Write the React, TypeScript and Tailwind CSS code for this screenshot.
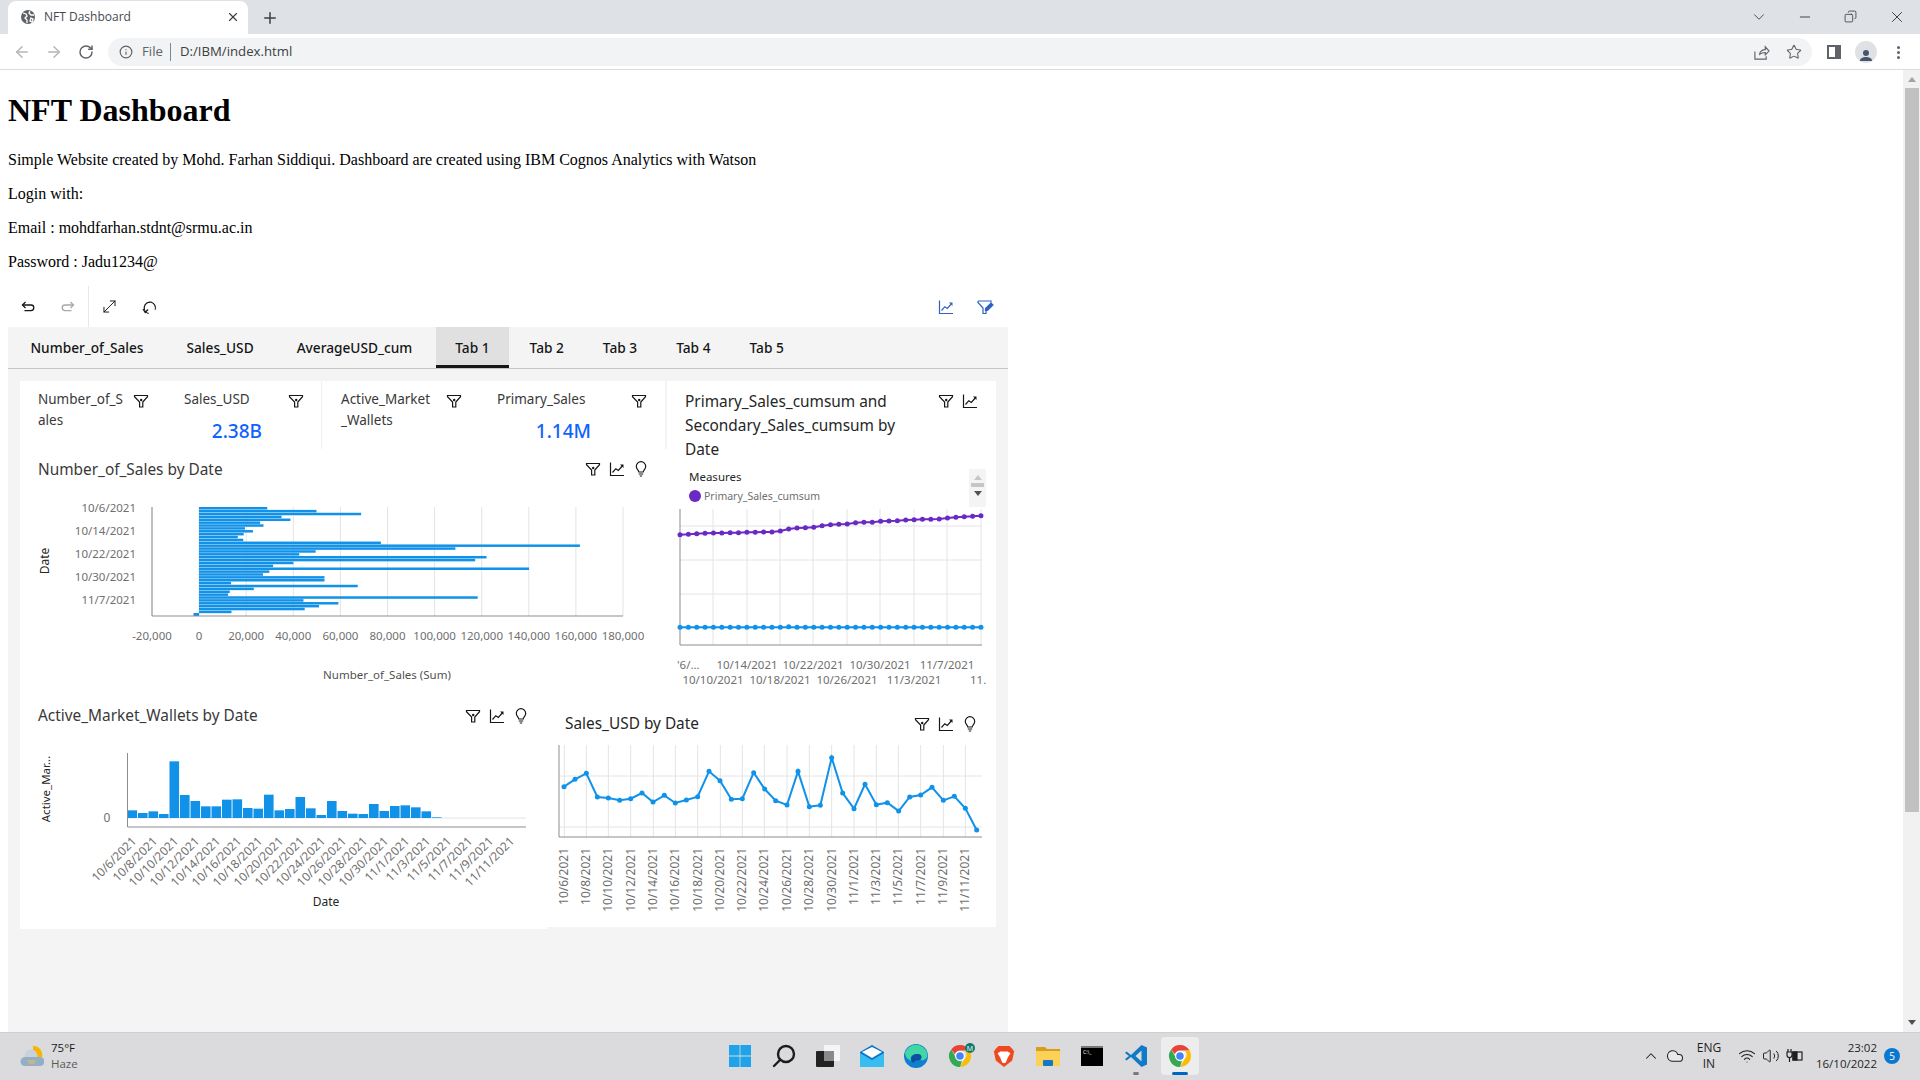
import { ArrowLeft, ArrowRight, ChevronDown, ChevronUp, Cloud, Copy, Info, Minus, MoveDiagonal, Plus, RotateCw, Star, Volume2, Wifi, X } from "lucide-react";

const dashFont = "font-['Noto_Sans',sans-serif]";
const sysFont = "font-['Open_Sans',sans-serif]";

const Funnel = ({ className = "" }: { className?: string }) => (
  <svg viewBox="0 0 16 16" className={`h-4 w-4 shrink-0 ${className}`} fill="none" stroke="#161616" strokeWidth="1.2">
    <path d="M1.500 2.500h13v1.200L9.800 9v5H6.600V9L1.500 3.700z" />
    <circle cx="8.200" cy="7" r="1.200" fill="#161616" stroke="none" />
  </svg>
);

const FunnelEdit = () => (
  <svg viewBox="0 0 18 16" className="h-4 w-[18px] shrink-0" fill="none" stroke="#2f62c0" strokeWidth="1.200">
    <path d="M1 2h13v1.500M1 2v1.500L6 9v5.500h3V12" />
    <path d="M8.500 11.500v-2L14 4l2 2-5.500 5.500z" fill="#2f62c0" />
  </svg>
);

const Trend = ({ color = "#161616", className = "" }: { color?: string; className?: string }) => (
  <svg viewBox="0 0 16 16" className={`h-4 w-4 shrink-0 ${className}`} fill="none" stroke={color} strokeWidth="1.200">
    <path d="M1.500 1.500v13h13.500" />
    <path d="M3.500 11.500l3.300-3.800 2.500 1.800 4-4.500" />
    <path d="M11 3.500h3.500V7z" fill={color} stroke="none" />
  </svg>
);

const Bulb = ({ className = "" }: { className?: string }) => (
  <svg viewBox="0 0 16 16" className={`h-4 w-4 shrink-0 ${className}`} fill="none" stroke="#161616" strokeWidth="1.200">
    <path d="M5.800 11c0-1.800-2.500-2.800-2.500-5.600a4.700 4.700 0 0 1 9.400 0c0 2.800-2.500 3.800-2.500 5.600z" />
    <path d="M5.800 13h4.400M6.800 15h2.400" />
  </svg>
);

const ChartIcons = ({ bulb = true, className = "" }: { bulb?: boolean; className?: string }) => (
  <div className={`flex items-center gap-2 ${className}`}>
    <Funnel />
    <Trend />
    {bulb && <Bulb />}
  </div>
);

const UndoIcon = ({ color }: { color: string }) => (
  <svg viewBox="0 0 16 16" className="h-4 w-4" fill="none" stroke={color} strokeWidth="1.300">
    <path d="M2.500 6H11a2.800 2.800 0 0 1 0 5.600H4.500" />
    <path d="M5.500 3L2.500 6l3 3" />
  </svg>
);

const ResetIcon = () => (
  <svg viewBox="0 0 16 16" className="h-4 w-4" fill="none" stroke="#161616" strokeWidth="1.200">
    <path d="M4.500 13.500A6 6 0 0 1 4 5.500a6 6 0 0 1 8.400-.5 6 6 0 0 1-.5 8.500" transform="rotate(-30 8 8)" />
    <path d="M2 10l2.200 3.500L7 10.500" />
  </svg>
);

const salesEnds = [635, 752, 858, 669, 690, 618, 626, 582, 601, 579, 565, 578, 905, 1378, 1082, 750, 711, 1156, 1129, 697, 649, 1257, 640, 625, 771, 771, 549, 850, 603, 546, 542, 1135, 721, 804, 758, 724, 550];

const BarChart = () => (
  <svg viewBox="20 490 645 210" width="645" height="210" className="block">
    {[0, 1, 2, 3, 4, 5, 6, 7, 8, 9, 10].map((i) => (
      <line key={i} x1={152 + 47.1 * i} x2={152 + 47.1 * i} y1="507" y2="616" stroke="#e4e4e4" />
    ))}
    {salesEnds.map((v, i) => (
      <rect key={i} x="199" y={507 + i * 2.88} width={v / 2.376 - 199} height="2.500" fill="#1192e8" />
    ))}
    <rect x="193.500" y="613" width="5.500" height="3" fill="#1192e8" />
    <path d="M152 507V616H623" fill="none" stroke="#8d8d8d" />
    {["10/6/2021", "10/14/2021", "10/22/2021", "10/30/2021", "11/7/2021"].map((t, i) => (
      <text key={t} x="136" y={512 + i * 23} textAnchor="end" fontSize="11.500" fill="#6f6f6f">{t}</text>
    ))}
    {["-20,000", "0", "20,000", "40,000", "60,000", "80,000", "100,000", "120,000", "140,000", "160,000", "180,000"].map((t, i) => (
      <text key={t} x={152 + 47.1 * i} y="640" textAnchor="middle" fontSize="11.500" fill="#6f6f6f">{t}</text>
    ))}
    <text x="387" y="679" textAnchor="middle" fontSize="11.500" fill="#525252">Number_of_Sales (Sum)</text>
    <text transform="translate(49 561) rotate(-90)" textAnchor="middle" fontSize="12" fill="#262626">Date</text>
  </svg>
);

const purple = [524, 523, 521, 520, 519, 519, 518, 518, 517, 517, 516, 516, 513, 507, 504, 503, 502, 497, 494, 493, 492, 488, 487, 487, 484, 483, 482, 480, 479, 478, 478, 477, 474, 472, 470, 469, 467];

const LineChart = () => {
  const xs = purple.map((_, i) => 680 + i * 8.36);
  const ys = purple.map((v) => 360 + v / 3);
  return (
    <svg viewBox="667 509 329 185" width="329" height="185" className="block">
      {[526, 560, 594, 628].map((y) => <line key={y} x1="680" x2="982" y1={y} y2={y} stroke="#e4e4e4" />)}
      {[713, 747, 780, 813, 847, 880, 914, 947, 981].map((x) => <line key={x} x1={x} x2={x} y1="509" y2="645" stroke="#e4e4e4" />)}
      <path d="M680 509V645H982" fill="none" stroke="#8d8d8d" />
      <polyline points={xs.map((x, i) => `${x},${ys[i]}`).join(" ")} fill="none" stroke="#6929c4" strokeWidth="2" />
      {xs.map((x, i) => <circle key={i} cx={x} cy={ys[i]} r="2.500" fill="#6929c4" />)}
      <line x1="680" x2="982" y1="627.300" y2="627.300" stroke="#1192e8" strokeWidth="2" />
      {xs.map((x, i) => <circle key={i} cx={x} cy={i === 13 ? 626.7 : 627.3} r="2.500" fill="#1192e8" />)}
      <text x="677" y="669" fontSize="11.500" fill="#6f6f6f">'6/...</text>
      {[["10/14/2021", 747], ["10/22/2021", 813], ["10/30/2021", 880], ["11/7/2021", 947]].map(([t, x]) => (
        <text key={t} x={x} y="669" textAnchor="middle" fontSize="11.500" fill="#6f6f6f">{t}</text>
      ))}
      {[["10/10/2021", 713], ["10/18/2021", 780], ["10/26/2021", 847], ["11/3/2021", 914]].map(([t, x]) => (
        <text key={t} x={x} y="684" textAnchor="middle" fontSize="11.500" fill="#6f6f6f">{t}</text>
      ))}
      <text x="970" y="684" fontSize="11.500" fill="#6f6f6f">11.</text>
    </svg>
  );
};

const walletTops = [361, 369, 364, 372, 214, 315, 333, 349, 349, 329, 328, 354, 356, 314, 361, 357, 321, 355, 375, 333, 363, 371, 372, 342, 363, 348, 346, 352, 364, 382];
const tickDates = ["10/6", "10/8", "10/10", "10/12", "10/14", "10/16", "10/18", "10/20", "10/22", "10/24", "10/26", "10/28", "10/30", "11/1", "11/3", "11/5", "11/7", "11/9", "11/11"];

const WalletChart = () => (
  <svg viewBox="20 745 527 170" width="527" height="170" className="block">
    <line x1="127" x2="526" y1="818" y2="818" stroke="#e4e4e4" />
    {walletTops.map((v, i) => {
      const top = 690 + v / 3;
      return <rect key={i} x={127.5 + i * 10.5} y={top} width="9.600" height={818 - top} fill="#1192e8" />;
    })}
    <path d="M127.500 753V827H526" fill="none" stroke="#8d8d8d" />
    <text x="107" y="822" textAnchor="middle" fontSize="12" fill="#6f6f6f">0</text>
    <text transform="translate(50 789) rotate(-90)" textAnchor="middle" fontSize="11.500" fill="#262626">Active_Mar...</text>
    {tickDates.map((d, i) => (
      <text key={d} transform={`translate(${137 + i * 21} 842) rotate(-45)`} textAnchor="end" fontSize="12" fill="#6f6f6f">{d}/2021</text>
    ))}
    <text x="326" y="906" textAnchor="middle" fontSize="12" fill="#262626">Date</text>
  </svg>
);

const usdPoints: [number, number][] = [[72, 260], [105, 238], [139, 220], [172, 291], [205, 294], [239, 301], [272, 296], [306, 279], [339, 306], [373, 286], [406, 309], [439, 300], [473, 290], [507, 214], [540, 242], [574, 298], [607, 296], [641, 218], [674, 267], [707, 302], [741, 315], [774, 214], [808, 320], [841, 316], [875, 173], [908, 279], [942, 326], [975, 253], [1009, 314], [1042, 308], [1076, 333], [1109, 291], [1142, 285], [1176, 262], [1210, 301], [1243, 289], [1276, 325], [1310, 390]];
const usdGrid = [73, 139, 205, 272, 340, 406, 473, 541, 607, 673, 741, 808, 875, 942, 1009, 1075, 1142, 1210, 1276];

const UsdChart = () => (
  <svg viewBox="547 740 449 180" width="449" height="180" className="block">
    {[776, 827].map((y) => <line key={y} x1="559" x2="982" y1={y} y2={y} stroke="#e4e4e4" />)}
    {usdGrid.map((x) => <line key={x} x1={540 + x / 3} x2={540 + x / 3} y1="745" y2="837" stroke="#e4e4e4" />)}
    <path d="M559 745V837H982" fill="none" stroke="#8d8d8d" />
    <polyline points={usdPoints.map(([x, y]) => `${540 + x / 3},${700 + y / 3}`).join(" ")} fill="none" stroke="#1192e8" strokeWidth="2" />
    {usdPoints.map(([x, y]) => <circle key={x} cx={540 + x / 3} cy={700 + y / 3} r="2.500" fill="#1192e8" />)}
    {tickDates.map((d, i) => (
      <text key={d} transform={`translate(${544 + usdGrid[i] / 3} 848) rotate(-90)`} textAnchor="end" fontSize="12" fill="#6f6f6f">{d}/2021</text>
    ))}
  </svg>
);

const ChromeLogo = ({ size = 24 }: { size?: number }) => (
  <svg viewBox="0 0 24 24" width={size} height={size}>
    <path d="M12 1a11 11 0 0 1 9.600 5.600H12a5.400 5.400 0 0 0-5.100 3.600L3.200 5.400A11 11 0 0 1 12 1z" fill="#ea4335" />
    <path d="M21.600 6.600A11 11 0 0 1 12 23l4.700-8a5.400 5.400 0 0 0 0-8.400z" fill="#fbbc04" />
    <path d="M3.200 5.400l4.700 8.400a5.400 5.400 0 0 0 6 3.400L12 23A11 11 0 0 1 3.200 5.400z" fill="#34a853" />
    <circle cx="12" cy="12" r="4.400" fill="#4285f4" stroke="#fff" strokeWidth="1.200" />
  </svg>
);

const TaskIcon = ({ children, active = false, dot = false }: { children: React.ReactNode; active?: boolean; dot?: boolean }) => (
  <div className="relative flex h-[38px] w-[44px] items-center justify-center">
    {active && <div className="absolute inset-y-0 left-[3px] right-[3px] rounded bg-[#ededee]" />}
    <div className="relative">{children}</div>
    {active && <div className="absolute bottom-0 left-[14px] h-[3px] w-[16px] rounded bg-[#0067c0]" />}
    {dot && <div className="absolute bottom-0 left-[19px] h-[3px] w-[6px] rounded bg-[#7a7a7a]" />}
  </div>
);

const Taskbar = () => (
  <div className={`flex h-12 shrink-0 items-center border-t border-[#cfcfcf] bg-[#dbdbdd] pb-px ${sysFont}`}>
    <div className="flex w-[718px] shrink-0 items-center pl-5">
      <svg viewBox="0 0 24 22" width="24" height="22">
        <path d="M13 1a9 9 0 0 1 9 11h-9z" fill="#f7b500" />
        <circle cx="11" cy="11" r="6.500" fill="#c6d3de" />
        <path d="M5 21a4.500 4.500 0 0 1 0-9h15a4.500 4.500 0 0 1 0 9z" fill="#93aec6" />
        <path d="M7 15h9a3 3 0 0 1-9 0z" fill="#c0b78f" />
      </svg>
      <div className="ml-[7px] text-[11.5px] leading-4">
        <div className="text-[#1a1a1a]">75°F</div>
        <div className="text-[#5a5a5a]">Haze</div>
      </div>
    </div>
    <TaskIcon>
      <svg viewBox="0 0 24 24" width="24" height="24">
        <path d="M1 1h10.600v10.600H1zM12.400 1H23v10.600H12.400zM1 12.400h10.600V23H1zM12.400 12.400H23V23H12.400z" fill="#1fa3ea" />
      </svg>
    </TaskIcon>
    <TaskIcon>
      <svg viewBox="0 0 24 24" width="24" height="24" fill="none" stroke="#1c1c1c" strokeWidth="2.400">
        <circle cx="14" cy="10" r="8" />
        <path d="M8 16l-6 6" strokeLinecap="round" />
      </svg>
    </TaskIcon>
    <TaskIcon>
      <svg viewBox="0 0 24 24" width="24" height="24">
        <rect x="8" y="1" width="16" height="16" rx="1" fill="#f5f5f5" />
        <rect x="0" y="7" width="18" height="16" rx="1" fill="#222" />
        <rect x="8" y="7" width="10" height="10" fill="#8a8a8a" />
      </svg>
    </TaskIcon>
    <TaskIcon>
      <svg viewBox="0 0 24 24" width="24" height="24">
        <path d="M0 8l12-7 12 7v15H0z" fill="#0a74c9" />
        <path d="M0 9l12 7 12-7v14H0z" fill="#38bdf0" />
        <path d="M2 8l10-5 10 5-10 6z" fill="#fff" />
      </svg>
    </TaskIcon>
    <TaskIcon>
      <svg viewBox="0 0 24 24" width="24" height="24">
        <circle cx="12" cy="12" r="12" fill="#0f7fd0" />
        <path d="M1 9a11.500 11.500 0 0 1 22 0c2 6-4 8-7 7 3-2 2-6-3-6-6 0-7 4-6 7C3 15 1 12 1 9z" fill="#42d6a4" />
        <path d="M7 15c0-3 3-5 7-5 4 0 4 4 2 6-4 1-6 0-6 3-2-1-3-2-3-4z" fill="#0b4f9e" />
      </svg>
    </TaskIcon>
    <TaskIcon>
      <div className="relative">
        <ChromeLogo />
        <div className="absolute -right-[3px] -top-[1px] flex h-[10px] w-[10px] items-center justify-center rounded-full bg-[#0f7b6c] text-[7px] leading-none text-white">M</div>
      </div>
    </TaskIcon>
    <TaskIcon>
      <svg viewBox="0 0 24 24" width="22" height="24">
        <path d="M6 1h12l3 3 2 3-2 10-9 7-9-7L1 7l2-3z" fill="#f1491f" />
        <path d="M8 7h8l3 2-3 5-2 5-2 1-2-1-2-5-3-5z" fill="#fff" />
      </svg>
    </TaskIcon>
    <TaskIcon>
      <svg viewBox="0 0 24 24" width="24" height="24">
        <path d="M0 3h9l2 2h13v4H0z" fill="#d99c1d" />
        <rect x="0" y="7" width="24" height="15" rx="1" fill="#fcd158" />
        <rect x="7" y="16" width="10" height="6" rx="1" fill="#1477c5" />
      </svg>
    </TaskIcon>
    <TaskIcon>
      <div className="flex h-[20px] w-[22px] items-start border-t-2 border-[#777] bg-black pl-[2px] text-[5px] leading-[8px] text-white">C:\_</div>
    </TaskIcon>
    <TaskIcon dot>
      <svg viewBox="0 0 24 24" width="24" height="24">
        <path d="M17.500 1L23 3.500v17L17.500 23 7 13l-4.500 3.500L1 15l4-3-4-3 1.500-1.500L7 11z" fill="#0f7ac6" />
        <path d="M17.500 6.500L11.500 12l6 5.500z" fill="#dbdbdd" />
      </svg>
    </TaskIcon>
    <TaskIcon active>
      <ChromeLogo />
    </TaskIcon>
    <div className="ml-auto flex items-center text-[#1f1f1f]">
      <ChevronUp size={18} strokeWidth={1.4} />
      <Cloud size={18} strokeWidth={1.4} className="ml-[6px] fill-[#e8e8e8]" />
      <div className="ml-[5px] w-[40px] text-center text-xs leading-4">
        <div>ENG</div>
        <div>IN</div>
      </div>
      <Wifi size={18} strokeWidth={1.4} className="ml-[9px]" />
      <Volume2 size={18} strokeWidth={1.3} className="ml-[6px]" />
      <svg viewBox="0 0 18 16" width="18" height="16" className="ml-[6px]" fill="none" stroke="#1f1f1f" strokeWidth="1.200">
        <path d="M2 1v3M5 1v3M1 4h5v3a2 2 0 0 1-5 0zM3.500 9v5" />
        <rect x="7" y="4" width="9" height="8" />
        <rect x="7" y="4" width="4" height="8" fill="#1f1f1f" />
      </svg>
      <div className="ml-[12px] text-right text-[11.5px] leading-4">
        <div>23:02</div>
        <div>16/10/2022</div>
      </div>
      <div className="ml-[7px] mr-[20px] flex h-4 w-4 items-center justify-center rounded-full bg-[#0b78d0] text-[10px] text-white">5</div>
    </div>
  </div>
);

const BrowserChrome = () => (
  <div className={`shrink-0 ${sysFont}`}>
    <div className="flex h-[34px] items-end bg-[#dee1e6] pl-2">
      <div className="flex h-[33px] w-[240px] items-center rounded-t-lg bg-white pb-px pl-3 pr-2 text-xs text-[#45494f]">
        <svg viewBox="0 0 16 16" width="16" height="16">
          <circle cx="8" cy="8" r="7" fill="#5f6368" />
          <path d="M3 4l3 1 1 2-2 2 2 2v3M10 2l-1 2 2 2 3 0M11 9l2 1-1 3-2-1z" fill="none" stroke="#fff" strokeWidth="1.300" />
        </svg>
        <span className="ml-2">NFT Dashboard</span>
        <X size={14} strokeWidth={2} className="ml-auto text-[#3c4043]" />
      </div>
      <Plus size={18} strokeWidth={2} className="mb-[7px] ml-[13px] text-[#3c4043]" />
      <ChevronDown size={18} strokeWidth={1.2} className="mb-[8px] ml-auto text-[#3c4043]" />
      <Minus size={16} strokeWidth={1.2} className="mb-[9px] ml-[29px] text-[#1f1f1f]" />
      <Copy size={13} strokeWidth={1.3} className="mb-[11px] ml-[31px] -scale-x-100 text-[#1f1f1f]" />
      <X size={18} strokeWidth={1.1} className="mb-[8px] ml-[31px] mr-[14px] text-[#1f1f1f]" />
    </div>
    <div className="flex h-9 items-center border-b border-[#dadce0] bg-white pt-px">
      <ArrowLeft size={18} className="ml-[13px] text-[#b3b6ba]" />
      <ArrowRight size={18} className="ml-[14px] text-[#b3b6ba]" />
      <RotateCw size={16} strokeWidth={2.2} className="ml-[15px] text-[#5f6368]" />
      <div className="ml-[14px] flex h-7 w-[1704px] items-center rounded-full bg-[#f1f3f4] pl-[11px] text-[13.2px] text-[#3c4043]">
        <Info size={14} className="text-[#5f6368]" />
        <span className="ml-[9px] text-[#5f6368]">File</span>
        <span className="ml-[7px] h-[18px] border-l border-[#80868b]" />
        <span className="ml-[9px]">D:/IBM/index.html</span>
        <svg viewBox="0 0 18 18" width="17" height="17" className="ml-auto mr-px" fill="none" stroke="#5f6368" strokeWidth="1.200">
          <path d="M2 8v8h12v-3M7 11c0-3 3-5 6-5V3l4 4.500-4 4V9c-2 0-4 .5-6 2z" />
        </svg>
        <Star size={16} strokeWidth={1.6} className="ml-[15px] mr-[10px] text-[#5f6368]" />
      </div>
      <div className="ml-[15px] h-[14px] w-[14px] border-[2px] border-r-[6px] border-[#5f6368]" />
      <div className="ml-[14px] flex h-[22px] w-[22px] items-end justify-center overflow-hidden rounded-full bg-[#dfe1e5]">
        <svg viewBox="0 0 16 16" width="16" height="16" fill="#45556c">
          <circle cx="8" cy="6" r="3" />
          <path d="M2 14c0-3 3-4 6-4s6 1 6 4z" />
        </svg>
      </div>
      <div className="ml-[20px] flex flex-col gap-[2px]">
        <span className="h-[3px] w-[3px] rounded-full bg-[#5f6368]" />
        <span className="h-[3px] w-[3px] rounded-full bg-[#5f6368]" />
        <span className="h-[3px] w-[3px] rounded-full bg-[#5f6368]" />
      </div>
    </div>
  </div>
);

const Scrollbar = () => (
  <div className="flex w-[17px] shrink-0 flex-col items-center bg-[#f1f1f1]">
    <div className="mt-[7px] h-0 w-0 border-x-[4px] border-b-[5px] border-x-transparent border-b-[#a3a3a3]" />
    <div className="mt-[6px] h-[724px] w-[14px] bg-[#c1c1c1]" />
    <div className="mt-auto mb-[7px] h-0 w-0 border-x-[4px] border-t-[5px] border-x-transparent border-t-[#505050]" />
  </div>
);

const namedTabs = ["Number_of_Sales", "Sales_USD", "AverageUSD_cum"];
const numberTabs = ["Tab 2", "Tab 3", "Tab 4", "Tab 5"];

const Dashboard = () => (
  <div className={`mt-[15.5px] flex min-h-0 w-[1000px] flex-1 flex-col bg-[#f4f4f4] text-[#161616] ${dashFont}`}>
    <div className="flex h-[41px] shrink-0 items-center bg-white pr-[2px]">
      <div className="flex h-full border-r border-[#e8e8e8]">
        <div className="flex w-10 items-center justify-center"><UndoIcon color="#161616" /></div>
        <div className="flex w-10 -scale-x-100 items-center justify-center"><UndoIcon color="#a8a8a8" /></div>
      </div>
      <div className="flex w-10 items-center justify-center"><MoveDiagonal size={19} strokeWidth={1.2} /></div>
      <div className="flex w-10 items-center justify-center"><ResetIcon /></div>
      <div className="ml-auto flex w-10 items-center justify-center"><Trend color="#2f62c0" /></div>
      <div className="flex w-10 items-center justify-center"><FunnelEdit /></div>
    </div>
    <div className="flex h-[42px] shrink-0 border-b border-[#c6c6c6] pl-px text-[13.7px] font-medium">
      {namedTabs.map((t) => (
        <div key={t} className="px-[21.5px] pt-[11px]">{t}</div>
      ))}
      <div className="ml-[2.5px] mr-[1.5px] border-b-[3px] border-[#161616] bg-[#e0e0e0] px-[19px] pt-[11px]">Tab 1</div>
      {numberTabs.map((t) => (
        <div key={t} className="px-[19.5px] pt-[11px]">{t}</div>
      ))}
    </div>
    <div className="pl-3 pt-3">
      <div className="flex w-[976px] bg-white">
        <div className="w-[647px] shrink-0">
          <div className="flex h-[68px] border-r-2 border-[#f4f4f4] text-[13.5px] leading-[21px] text-[#393939]">
            <div className="flex w-[302px] border-r border-[#f0f0f0] pl-[18px] pt-[8px]">
              <div className="w-[86px] break-all">Number_of_Sales</div>
              <Funnel className="ml-[9px] mt-[4px]" />
              <div className="ml-[35px] w-[120px]">
                <div className="flex items-start justify-between">
                  <span>Sales_USD</span>
                  <Funnel className="mt-[4px]" />
                </div>
                <div className="mr-[42px] mt-[7px] text-right text-[19px] font-medium leading-7 text-[#0f62fe]">2.38B</div>
              </div>
            </div>
            <div className="flex flex-1 pl-[19px] pt-[8px]">
              <div className="w-[92px] break-all">Active_Market_Wallets</div>
              <Funnel className="ml-[13px] mt-[4px]" />
              <div className="ml-[35px] w-[150px]">
                <div className="flex items-start justify-between">
                  <span>Primary_Sales</span>
                  <Funnel className="mt-[4px]" />
                </div>
                <div className="mr-[56px] mt-[7px] text-right text-[19px] font-medium leading-7 text-[#0f62fe]">1.14M</div>
              </div>
            </div>
          </div>
          <div className="flex h-[41px] items-center justify-between pl-[18px] pr-[18px] text-[15.4px] text-[#393939]">
            <span className="pb-[1px]">Number_of_Sales by Date</span>
            <ChartIcons className="pb-px" />
          </div>
          <BarChart />
        </div>
        <div className="flex-1">
          <div className="flex items-start justify-between pl-[18px] pr-[18px] pt-[9px] text-[15.4px] leading-6 text-[#262626]">
            <span className="w-[225px]">Primary_Sales_cumsum and Secondary_Sales_cumsum by Date</span>
            <ChartIcons bulb={false} className="mt-[3px]" />
          </div>
          <div className="flex h-[47px] items-start justify-between pl-[22px] pr-[10px] pt-[7px]">
            <div>
              <div className="text-[11.5px] leading-4 text-[#262626]">Measures</div>
              <div className="mt-[3px] flex items-center text-[10.5px] text-[#6f6f6f]">
                <span className="h-3 w-3 rounded-full bg-[#6929c4]" />
                <span className="ml-[3px] leading-4">Primary_Sales_cumsum</span>
              </div>
            </div>
            <div className="flex h-[38px] w-[17px] flex-col items-center bg-[#f4f4f4] pt-[6px]">
              <div className="h-0 w-0 border-x-[4px] border-b-[5px] border-x-transparent border-b-[#c6c6c6]" />
              <div className="mt-[3px] h-[4px] w-[13px] bg-[#c6c6c6]" />
              <div className="mt-[4px] h-0 w-0 border-x-[4px] border-t-[5px] border-x-transparent border-t-[#525252]" />
            </div>
          </div>
          <LineChart />
        </div>
      </div>
      <div className="flex w-[976px] items-start">
        <div className="h-[229px] w-[527px] shrink-0 bg-white">
          <div className="mb-[13px] flex h-[32px] items-center justify-between pb-px pl-[18px] pr-[18px] text-[15.4px] text-[#393939]">
            <span>Active_Market_Wallets by Date</span>
            <ChartIcons />
          </div>
          <WalletChart />
        </div>
        <div className="h-[227px] flex-1 bg-white">
          <div className="flex h-[40px] items-end justify-between pb-[6px] pl-[18px] pr-[18px] text-[15.4px] text-[#262626]">
            <span className="leading-5">Sales_USD by Date</span>
            <ChartIcons className="mb-[2px]" />
          </div>
          <UsdChart />
        </div>
      </div>
    </div>
  </div>
);

export default function App() {
  return (
    <div className="flex h-screen w-full flex-col overflow-hidden bg-white">
      <BrowserChrome />
      <div className="flex min-h-0 flex-1">
        <div className="flex min-w-0 flex-1 flex-col pl-2 pt-[22.44px] font-['Liberation_Serif',serif] text-black">
          <h1 className="mb-[21.44px] text-[32px] font-bold leading-[37px]">NFT Dashboard</h1>
          <p className="mb-4 text-base leading-[18px]">Simple Website created by Mohd. Farhan Siddiqui. Dashboard are created using IBM Cognos Analytics with Watson</p>
          <p className="mb-4 text-base leading-[18px]">Login with:</p>
          <p className="mb-4 text-base leading-[18px]">Email : mohdfarhan.stdnt@srmu.ac.in</p>
          <p className="text-base leading-[18px]">Password : Jadu1234@</p>
          <Dashboard />
        </div>
        <Scrollbar />
      </div>
      <Taskbar />
    </div>
  );
}
